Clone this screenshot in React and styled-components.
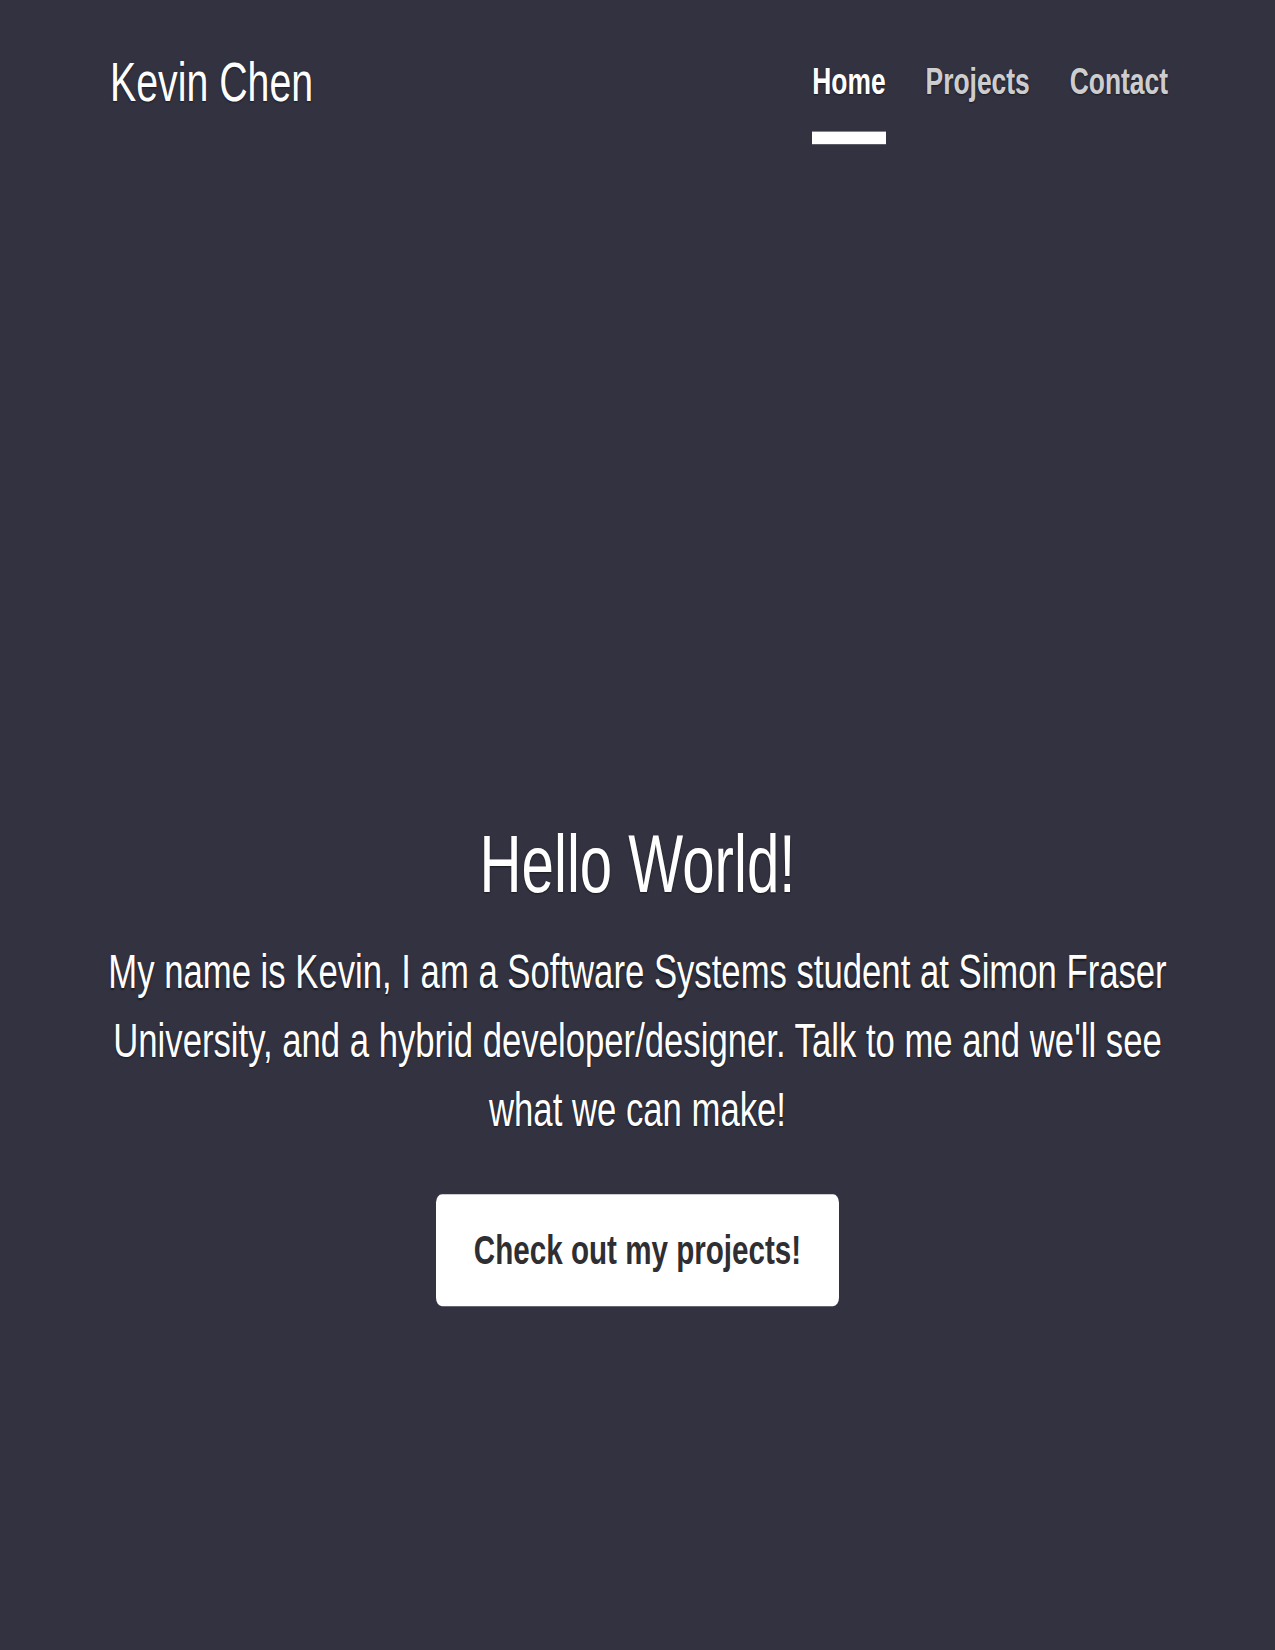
import React from "react";
import styled, { createGlobalStyle } from "styled-components";

// the reference is drawn 1.4x taller than wide, so the page is laid out
// at 1650 / 1.4 and stretched vertically once at the root
const STRETCH = 1.4;

const GlobalStyle = createGlobalStyle`
    html, body {
        margin: 0;
        padding: 0;
        background: #333240;
    }
`;

const Frame = styled.div`
    width: 1275px;
    height: 1650px;
    overflow: hidden;
    background: #333240;
`;

const Page = styled.div`
    width: 1275px;
    height: ${1650 / STRETCH}px;
    color: #fff;
    font-family: "Liberation Sans", Arial, sans-serif;
    text-shadow: 0 0.8px 1.6px rgba(0, 0, 0, 0.5);
    transform: scaleY(${STRETCH});
    transform-origin: top left;
    display: flex;
    flex-direction: column;
`;

const Header = styled.header`
    display: flex;
    justify-content: space-between;
    align-items: flex-start;
    padding: 34.5px 107px 0 110px;
`;

const Brand = styled.h3`
    margin: 0;
    font-size: 39.3px;
    font-weight: 400;
    line-height: 1.2;
`;

const Nav = styled.nav`
    display: flex;
    gap: 40px;
`;

const NavLink = styled.a`
    display: block;
    padding: 4px 0 17px;
    font-size: 26.4px;
    font-weight: 700;
    line-height: 38.5px;
    color: ${(p) => (p.$active ? "#fff" : "rgba(255, 255, 255, 0.8)")};
    text-decoration: none;
    border-bottom: 9px solid ${(p) => (p.$active ? "#fff" : "transparent")};
    cursor: pointer;
`;

const Hero = styled.main`
    display: flex;
    flex-direction: column;
    align-items: center;
    padding: 0 90px;
    margin-top: 479px;
    text-align: center;
`;

const Heading = styled.h1`
    margin: 0;
    font-size: 58.2px;
    font-weight: 400;
    line-height: 69px;
`;

const Lead = styled.p`
    margin: 19px 0 0;
    font-size: 34.7px;
    line-height: 49px;
`;

const Button = styled.a`
    display: inline-block;
    margin-top: 36px;
    padding: 17.8px 37.5px;
    font-size: 29.6px;
    font-weight: 700;
    line-height: 44px;
    color: #2e2e33;
    background: #fff;
    border-radius: 6px;
    text-shadow: none;
    text-decoration: none;
    cursor: pointer;
`;

const links = ["Home", "Projects", "Contact"];

export default function App() {
    return (
        <>
            <GlobalStyle />
            <Frame>
                <Page>
                    <Header>
                        <Brand>Kevin Chen</Brand>
                        <Nav>
                            {links.map((l) => (
                                <NavLink key={l} $active={l === "Home"}>{l}</NavLink>
                            ))}
                        </Nav>
                    </Header>
                    <Hero>
                        <Heading>Hello World!</Heading>
                        <Lead>
                            My name is Kevin, I am a Software Systems student at Simon Fraser
                            University, and a hybrid developer/designer. Talk to me and we'll see
                            what we can make!
                        </Lead>
                        <Button>Check out my projects!</Button>
                    </Hero>
                </Page>
            </Frame>
        </>
    );
}
